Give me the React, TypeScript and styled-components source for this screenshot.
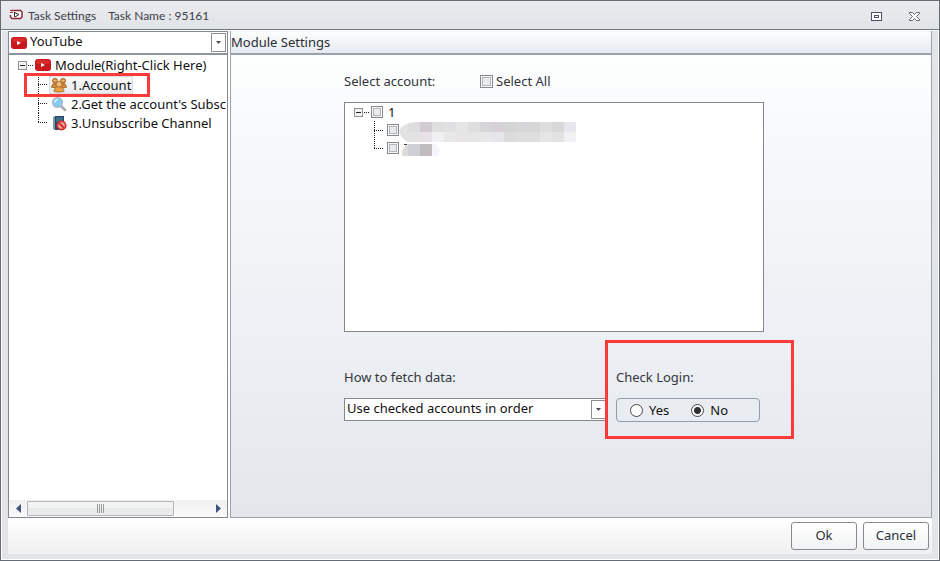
import React, { useState } from "react";
import styled, { createGlobalStyle, css } from "styled-components";

const GlobalStyle = createGlobalStyle`
  *, *::before, *::after { box-sizing: border-box; }
  html, body, #root { height: 100%; }
  body { margin: 0; font: 13px/18px "Noto Sans", sans-serif; color: #111; }
  button, select, input { font: inherit; color: inherit; margin: 0; }
  ul { list-style: none; margin: 0; padding: 0; }
`;

const Window = styled.div`
  display: flex;
  flex-direction: column;
  min-height: 100%;
  border: 1px solid #646c76;
  background: #e1e5e8;
`;

const TitleBar = styled.header`
  display: flex;
  align-items: center;
  height: 29px;
  padding: 0 19px 0 8px;
  border-bottom: 1px solid #6d7782;
  background: linear-gradient(#ebebf0, #e0e4e7);
  color: #3c4148;
  font: 12px/16px Lato, sans-serif;
`;

const TitleText = styled.h1`
  margin: 2px 0 0 4px;
  font: inherit;
`;

const TaskName = styled.span`
  margin: 2px auto 0 12px;
`;

const WindowButton = styled.button`
  display: grid;
  place-items: center;
  width: 12px;
  height: 12px;
  margin: 3px 0 0 26px;
  padding: 0;
  border: 0;
  background: none;
`;

const Frame = styled.div`
  display: flex;
  flex: 1;
  flex-direction: column;
  padding: 0 6px 5px;
  border: 1px solid #fff;
`;

const Workspace = styled.div`
  display: grid;
  flex: 1;
  grid-template-columns: 220px 1fr;
  gap: 2px;
  background: #fff;
`;

const Sidebar = styled.aside`
  display: flex;
  flex-direction: column;
  min-width: 0;
  border: 1px solid #85898f;
  background: #fff;
`;

const ComboBox = styled.div<{ $bordered?: boolean }>`
  display: flex;
  position: relative;
  align-items: center;
  height: ${(p) => (p.$bordered ? "23px" : "21px")};
  background: #fff;
  ${(p) => p.$bordered && css`border: 1px solid #85898f;`}
`;

const ComboIcon = styled.span`
  display: flex;
  position: absolute;
  left: 2px;
  pointer-events: none;
`;

const ComboSelect = styled.select<{ $withIcon?: boolean }>`
  width: 100%;
  height: 100%;
  padding: 0 20px 3px ${(p) => (p.$withIcon ? "21px" : "2px")};
  border: 0;
  border-radius: 0;
  appearance: none;
  background: none;
  color: #111;
`;

const ComboArrow = styled.span`
  display: grid;
  position: absolute;
  top: 1px;
  right: 1px;
  bottom: 1px;
  place-items: center;
  width: 15px;
  border: 1px solid #8b9096;
  background: #fff;
  pointer-events: none;
`;

const ModuleTree = styled.ul`
  flex: 1;
  overflow: hidden;
  border-top: 2px solid #8f959c;
`;

const ModuleRoot = styled.div`
  display: flex;
  align-items: center;
  height: 20px;
  padding-left: 9px;
  white-space: nowrap;
`;

const ModuleIcon = styled.span`
  display: flex;
  margin: 0 4px 0 2px;
`;

const ModuleItem = styled.li`
  display: flex;
  align-items: center;
  height: 19px;
  padding-left: 29px;
`;

const ModuleButton = styled.button<{ $selected: boolean }>`
  display: flex;
  flex: none;
  align-items: center;
  gap: 4px;
  height: 18px;
  padding: 0 1px;
  border: 1px solid ${(p) => (p.$selected ? "#dadcde" : "transparent")};
  background: ${(p) => (p.$selected ? "linear-gradient(#f8f8f9, #e9ebed)" : "none")};
  white-space: nowrap;
`;

const ScrollBar = styled.div`
  display: flex;
  align-items: center;
  height: 17px;
  background: linear-gradient(#efefef, #fbfbfb);
`;

const ScrollButton = styled.button`
  display: grid;
  place-items: center;
  width: 18px;
  height: 17px;
  padding: 0;
  border: 0;
  background: none;
`;

const ScrollTrack = styled.div`
  flex: 1;
`;

const ScrollThumb = styled.div`
  display: grid;
  place-items: center;
  width: 81%;
  height: 15px;
  border: 1px solid #b4b6ba;
  border-radius: 1px;
  background: linear-gradient(#f2f3f3 50%, #e7e8e9 50%, #ededee);
`;

const Main = styled.main`
  display: flex;
  flex-direction: column;
  border: 1px solid #9aa3b0;
  border-top: 0;
`;

const PanelHeader = styled.h2`
  height: 24px;
  margin: 0;
  padding: 1px 0 0;
  border-top: 1px solid #f3f5f6;
  border-bottom: 2px solid #99a2ae;
  background: linear-gradient(#fcfdfd, #e6eaef);
  color: #2a2d35;
  font: 13px/18px "Noto Sans", sans-serif;
`;

const Content = styled.form`
  display: flex;
  flex: 1;
  flex-direction: column;
  padding: 17px 0 0 113px;
  background: linear-gradient(#fdfefe, #f7f8fa 20%, #edf0f4 60%, #e3e6eb);
  color: #33363d;
`;

const AccountHeader = styled.div`
  display: grid;
  grid-template-columns: 136px auto;
  height: 20px;
  margin-bottom: 10px;
`;

const CheckLabel = styled.label`
  display: flex;
  align-items: center;
  gap: 3px;
  height: 18px;
`;

const CheckBox = styled.input.attrs({ type: "checkbox" })<{ $small?: boolean }>`
  flex: none;
  width: ${(p) => (p.$small ? "12px" : "13px")};
  height: ${(p) => (p.$small ? "12px" : "13px")};
  appearance: none;
  border: 1px solid #85898f;
  background: #e9eaec;
  box-shadow: inset 0 0 0 1px #f6f6f7, inset 0 0 0 2px #b2b6ba;
  &:checked { background: #4d525a; }
`;

const AccountTree = styled.ul`
  width: 420px;
  height: 230px;
  border: 1px solid #85898f;
  background: #fff;
  color: #111;
`;

const AccountRow = styled.div<{ $nested?: boolean }>`
  display: flex;
  align-items: center;
  height: 18px;
  padding-left: ${(p) => (p.$nested ? "29px" : "9px")};
`;

const GroupLabel = styled.label`
  display: flex;
  align-items: center;
  gap: 5px;
  margin-left: 2px;
`;

const MaskLabel = styled.label`
  display: flex;
  align-items: center;
  margin-left: 2px;
`;

const Options = styled.div`
  display: grid;
  grid-template-columns: 264px 144px;
  gap: 8px;
  position: relative;
  margin-top: 36px;
`;

const Field = styled.div`
  display: flex;
  flex-direction: column;
  gap: 12px;
`;

const FieldLabel = styled.label`
  height: 18px;
`;

const RadioField = styled.fieldset`
  min-width: 0;
  margin: 0;
  padding: 0;
  border: 0;
`;

const RadioLegend = styled.legend`
  height: 18px;
  margin-bottom: 12px;
  padding: 0;
`;

const RadioGroup = styled.div`
  display: flex;
  align-items: center;
  gap: 22px;
  height: 24px;
  padding-left: 13px;
  border: 1px solid #949cab;
  border-radius: 4px;
`;

const RadioLabel = styled.label`
  display: flex;
  align-items: center;
  gap: 6px;
  color: #111;
`;

const Radio = styled.input.attrs({ type: "radio" })`
  width: 13px;
  height: 13px;
  appearance: none;
  border: 1px solid #45484d;
  border-radius: 50%;
  background: #fff;
  &:checked { background: radial-gradient(circle, #303030 3px, #fff 4px); }
`;

const CalloutAnchor = styled.div`
  position: relative;
`;

const Callout = styled.span<{ $area: "module" | "login" }>`
  position: absolute;
  border: 3px solid #fb3a3a;
  pointer-events: none;
  ${(p) =>
    p.$area === "module"
      ? css`top: -2px; left: 15px; width: 126px; height: 24px;`
      : css`top: -28px; left: 261px; width: 189px; height: 99px;`}
`;

const Footer = styled.footer`
  display: flex;
  justify-content: flex-end;
  gap: 6px;
  height: 36px;
  padding: 4px 3px 0;
  background: linear-gradient(#fff, #efefef);
`;

const DialogButton = styled.button`
  width: 66px;
  height: 28px;
  padding: 0 0 2px;
  border: 1px solid #858991;
  border-radius: 3px;
  background: linear-gradient(#fff, #f1f2f3);
  color: #2c3038;
`;

const YouTubeIcon = () => (
  <svg width="16" height="12" viewBox="0 0 16 12" aria-hidden="true">
    <rect width="16" height="12" rx="3" fill="#c9171e" />
    <rect x="1" y="1" width="14" height="4" rx="2" fill="#d8292b" />
    <path d="M6 4v4L10 6z" fill="#fff" />
  </svg>
);

const AppIcon = () => (
  <svg width="15" height="12" viewBox="0 0 15 12" aria-hidden="true">
    <path d="M2 1.500h9.500L13 3v5l-1.500 1.500H3L1.500 8V6" fill="#fff" stroke="#8f2a33" strokeWidth="1.500" />
    <path d="M1 1.500h4M1 3.500h3" stroke="#a8323a" strokeWidth="1.200" />
    <path d="M5.500 3v5M5.500 3.500l4.500 2-4 2.500" fill="none" stroke="#3c2a2f" />
  </svg>
);

const ArrowIcon = () => (
  <svg width="5" height="3" viewBox="0 0 5 3" aria-hidden="true"><path d="M0 0h5L2.500 3z" fill="#494e59" /></svg>
);

const ExpanderIcon = () => (
  <svg width="15" height="9" viewBox="0 0 15 9" shapeRendering="crispEdges" aria-hidden="true">
    <rect x=".5" y=".5" width="8" height="8" fill="#f2f2f2" stroke="#919191" />
    <path d="M2 4.500h5" stroke="#222" />
    <path d="M10 4.500h5" stroke="#222" strokeDasharray="1 1" />
  </svg>
);

const BranchLine = styled.svg`
  flex: none;
`;

const Branch = ({ last, height }: { last?: boolean; height: number }) => (
  <BranchLine width="11" height={height} viewBox={`0 0 11 ${height}`} shapeRendering="crispEdges" aria-hidden="true">
    <path d={`M.5 0V${last ? 10 : height}`} stroke="#222" strokeDasharray="1 1" />
    <path d="M0 9.500h10" stroke="#222" strokeDasharray="1 1" />
  </BranchLine>
);

const PeopleIcon = () => (
  <svg width="16" height="16" viewBox="0 0 16 16" aria-hidden="true">
    <g fill="#d38a35" stroke="#8d541c" strokeWidth=".6">
      <path d="M.5 10.500q0-4 3.500-4t3.500 4zM8.500 10.500q0-4 3.500-4t3.500 4z" />
      <circle cx="4" cy="3.800" r="2.600" /><circle cx="12" cy="3.800" r="2.600" />
      <path d="M3 14.500q0-5 5-5t5 5q-5 1.500-10 0z" fill="#e6a044" />
      <circle cx="8" cy="7.200" r="2.900" fill="#edb878" />
    </g>
    <path d="M3 3.500q1 1 2.500 0M10.800 3.500q1 1 2.500 0" fill="none" stroke="#f5d0a0" />
  </svg>
);

const SearchIcon = () => (
  <svg width="16" height="16" viewBox="0 0 16 16" aria-hidden="true">
    <path d="M9.500 9.500l4.500 4.500" stroke="#a7abaf" strokeWidth="2.500" strokeLinecap="round" />
    <circle cx="6.500" cy="6.500" r="4.800" fill="#83cdf3" stroke="#a9b9c3" strokeWidth="1.500" />
    <path d="M4 6.500q0-3 3-3" fill="none" stroke="#d8f2ff" strokeWidth="1.500" />
  </svg>
);

const BlockIcon = () => (
  <svg width="16" height="16" viewBox="0 0 16 16" aria-hidden="true">
    <path d="M2 2l2-1v14l-2-1z" fill="#7d98a9" />
    <path d="M4 1h9v14H4z" fill="#28465d" />
    <path d="M5 2h7v5H5z" fill="#3e6c8c" />
    <circle cx="10.500" cy="10.500" r="4.200" fill="#e7a9a5" stroke="#d6302e" strokeWidth="1.800" />
    <path d="M8 8l5 5" stroke="#d6302e" strokeWidth="1.800" />
  </svg>
);

const RestoreIcon = () => (
  <svg width="11" height="9" viewBox="0 0 11 9" shapeRendering="crispEdges" aria-hidden="true">
    <rect x=".5" y=".5" width="10" height="8" fill="#fff" stroke="#50506b" />
    <rect x="3.500" y="3.500" width="4" height="2" fill="#fff" stroke="#50506b" />
  </svg>
);

const CloseIcon = () => (
  <svg width="11" height="9" viewBox="0 0 11 9" aria-hidden="true">
    <path d="M.5.5h3l2 2 2-2h3v1l-3 3 3 3v1h-3l-2-2-2 2h-3v-1l3-3-3-3z" fill="#fff" stroke="#50506b" strokeWidth=".9" />
  </svg>
);

const ScrollArrow = ({ right }: { right?: boolean }) => (
  <svg width="5" height="9" viewBox="0 0 5 9" aria-hidden="true">
    <path d={right ? "M0 0v9l5-4.500z" : "M5 0v9L0 4.500z"} fill="#42527f" />
  </svg>
);

const GripIcon = () => (
  <svg width="7" height="9" viewBox="0 0 7 9" shapeRendering="crispEdges" aria-hidden="true">
    <path d="M.5 0v9M2.500 0v9M4.500 0v9M6.500 0v9" stroke="#9a9b9d" />
  </svg>
);

const upperTones = ["#e4e4e4", "#dedddd", "#d0cad1", "#dedede", "#dfe0e1", "#e5e5e5", "#dededf", "#d6d5d7", "#d5d1d6", "#d3d5d4", "#d6d6d8", "#d6d6d6", "#dddddd", "#d8d8d9", "#e7e8ed"];
const lowerTones = ["#e2e2e2", "#e2e2e2", "#e5e1e5", "#f0f0f2", "#e8e8e8", "#e6e5e3", "#e5e5e6", "#e8e8e8", "#e6e5e9", "#dadbda", "#dedede", "#dededf", "#e5e5e5", "#e2e2e2", "#f1f1f3"];

const LongMask = () => (
  <svg width="177" height="24" viewBox="0 -4 177 24" role="img" aria-label="Hidden account">
    <clipPath id="long-mask"><path d="M0 8Q4 1 17 0H177V20H10Q2 18 0 8z" /></clipPath>
    <g clipPath="url(#long-mask)" shapeRendering="crispEdges">
      {upperTones.map((c, i) => <rect key={i} x={i * 12 - 3} width="12" height="10" fill={c} />)}
      {lowerTones.map((c, i) => <rect key={i} x={i * 12 - 3} y="10" width="12" height="10" fill={c} />)}
    </g>
  </svg>
);

const ShortMask = () => (
  <svg width="41" height="16" viewBox="-3 -4 41 16" role="img" aria-label="Hidden account">
    <path d="M0 12V8Q2 2 6 0v12z" fill="#dcdbd8" />
    <path d="M6 0h12v12H6z" fill="#cfd0d5" />
    <path d="M18 0h12v12H18z" fill="#c1bcbe" />
    <path d="M30-1q7 1 8 7l-2 6h-6z" fill="#f5f6fb" />
    <path d="M2 .5h3" stroke="#4a3b22" />
  </svg>
);

const modules = [
  { name: "1.Account", icon: <PeopleIcon /> },
  { name: "2.Get the account's Subsc", icon: <SearchIcon /> },
  { name: "3.Unsubscribe Channel", icon: <BlockIcon /> },
];

export default function App() {
  const [selected, setSelected] = useState(0);
  return (
    <Window>
      <GlobalStyle />
      <TitleBar>
        <AppIcon />
        <TitleText>Task Settings</TitleText>
        <TaskName>Task Name : 95161</TaskName>
        <WindowButton aria-label="Restore"><RestoreIcon /></WindowButton>
        <WindowButton aria-label="Close"><CloseIcon /></WindowButton>
      </TitleBar>
      <Frame>
        <Workspace>
          <Sidebar>
            <ComboBox>
              <ComboIcon><YouTubeIcon /></ComboIcon>
              <ComboSelect $withIcon aria-label="Platform"><option>YouTube</option></ComboSelect>
              <ComboArrow><ArrowIcon /></ComboArrow>
            </ComboBox>
            <ModuleTree>
              <li>
                <ModuleRoot>
                  <ExpanderIcon />
                  <ModuleIcon><YouTubeIcon /></ModuleIcon>
                  Module(Right-Click Here)
                </ModuleRoot>
                <CalloutAnchor>
                  <ul>
                    {modules.map((m, i) => (
                      <ModuleItem key={m.name}>
                        <Branch height={19} last={i === modules.length - 1} />
                        <ModuleButton $selected={i === selected} onClick={() => setSelected(i)}>
                          {m.icon}
                          {m.name}
                        </ModuleButton>
                      </ModuleItem>
                    ))}
                  </ul>
                  <Callout $area="module" />
                </CalloutAnchor>
              </li>
            </ModuleTree>
            <ScrollBar>
              <ScrollButton aria-label="Scroll left"><ScrollArrow /></ScrollButton>
              <ScrollTrack><ScrollThumb><GripIcon /></ScrollThumb></ScrollTrack>
              <ScrollButton aria-label="Scroll right"><ScrollArrow right /></ScrollButton>
            </ScrollBar>
          </Sidebar>
          <Main>
            <PanelHeader>Module Settings</PanelHeader>
            <Content onSubmit={(e) => e.preventDefault()}>
              <AccountHeader>
                <span id="account-title">Select account:</span>
                <CheckLabel><CheckBox />Select All</CheckLabel>
              </AccountHeader>
              <AccountTree aria-labelledby="account-title">
                <li>
                  <AccountRow>
                    <ExpanderIcon />
                    <GroupLabel><CheckBox $small />1</GroupLabel>
                  </AccountRow>
                  <ul>
                    <li><AccountRow $nested><Branch height={18} /><MaskLabel><CheckBox $small /><LongMask /></MaskLabel></AccountRow></li>
                    <li><AccountRow $nested><Branch height={18} last /><MaskLabel><CheckBox $small /><ShortMask /></MaskLabel></AccountRow></li>
                  </ul>
                </li>
              </AccountTree>
              <Options>
                <Field>
                  <FieldLabel htmlFor="fetch">How to fetch data:</FieldLabel>
                  <ComboBox $bordered>
                    <ComboSelect id="fetch"><option>Use checked accounts in order</option></ComboSelect>
                    <ComboArrow><ArrowIcon /></ComboArrow>
                  </ComboBox>
                </Field>
                <RadioField>
                  <RadioLegend>Check Login:</RadioLegend>
                  <RadioGroup>
                    <RadioLabel><Radio name="login" />Yes</RadioLabel>
                    <RadioLabel><Radio name="login" defaultChecked />No</RadioLabel>
                  </RadioGroup>
                </RadioField>
                <Callout $area="login" />
              </Options>
            </Content>
          </Main>
        </Workspace>
        <Footer>
          <DialogButton>Ok</DialogButton>
          <DialogButton>Cancel</DialogButton>
        </Footer>
      </Frame>
    </Window>
  );
}
